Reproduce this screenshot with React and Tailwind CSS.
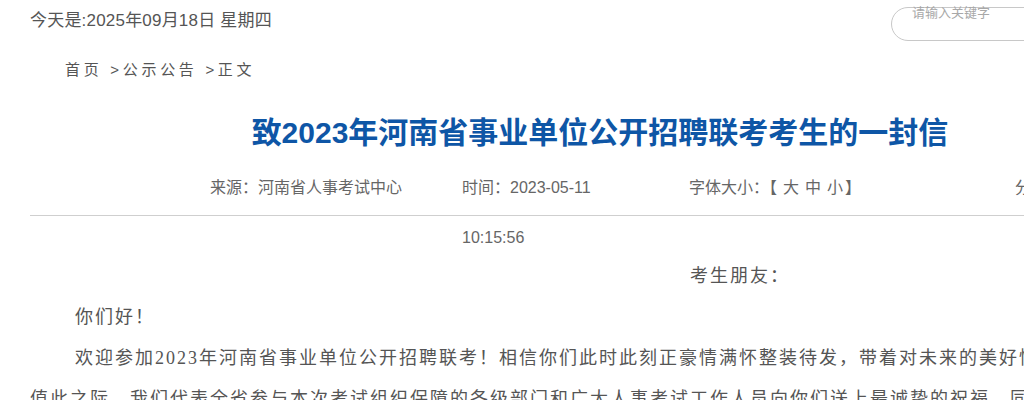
export default function App() {
  const sans = "font-['Liberation_Sans','Noto_Sans_CJK_SC',sans-serif]";
  return (
    <div className={`w-[1024px] h-[400px] overflow-hidden bg-white ${sans}`}>
      <div className="ml-[30px] w-[1140px]">
        {/* header */}
        <div className="flex items-start justify-between pt-[7px]">
          <div className="text-[17px] leading-[28px] tracking-[0.2px] text-[#555]">今天是:2025年09月18日 星期四</div>
          <div className="w-[279px] h-[34px] rounded-l-full border border-[#c8c8c8] pl-[20px]">
            <div className="mt-[-3px] text-[13px] leading-[16px] text-[#a8a8a8]">请输入关键字</div>
          </div>
        </div>

        {/* breadcrumb */}
        <div className="mt-[14px] pl-[35px] text-[15px] leading-[30px] tracking-[3.7px] text-[#555]">
          首页 &gt;公示公告 &gt;正文
        </div>

        {/* title */}
        <h1 className="mt-[23px] text-center text-[30px] leading-[50px] font-bold text-[#0e56a6]">
          致2023年河南省事业单位公开招聘联考考生的一封信
        </h1>

        {/* meta */}
        <div className="mt-[5px] flex h-[53px] border-b border-[#cfcfcf] pl-[180px] text-[16px] leading-[50px] text-[#666]">
          <span className="w-[252px] shrink-0">来源：河南省人事考试中心</span>
          <span className="w-[160px] shrink-0 mr-[67px]">时间：2023-05-11 10:15:56</span>
          <span className="w-[326px] shrink-0 flex">
            <span>字体大小：【</span>
            <span className="ml-[6px]">大</span>
            <span className="ml-[6px]">中</span>
            <span className="ml-[6px]">小</span>
            <span className="ml-[2px]">】</span>
          </span>
          <span className="shrink-0 whitespace-nowrap">分享到：</span>
        </div>

        {/* body */}
        <div className="mt-[40px] font-['Liberation_Serif','Noto_Sans_CJK_SC',serif] text-[18px] leading-[41px] tracking-[2px] text-[#555]">
          <p className="pl-[660px]">考生朋友：</p>
          <p className="indent-[45px]">你们好！</p>
          <p className="indent-[45px] whitespace-nowrap">
            欢迎参加2023年河南省事业单位公开招聘联考！相信你们此时此刻正豪情满怀整装待发，带着对未来的美好憧憬走进考场。
            <br />
            值此之际，我们代表全省参与本次考试组织保障的各级部门和广大人事考试工作人员向你们送上最诚挚的祝福。同时，
          </p>
        </div>
      </div>
    </div>
  );
}
